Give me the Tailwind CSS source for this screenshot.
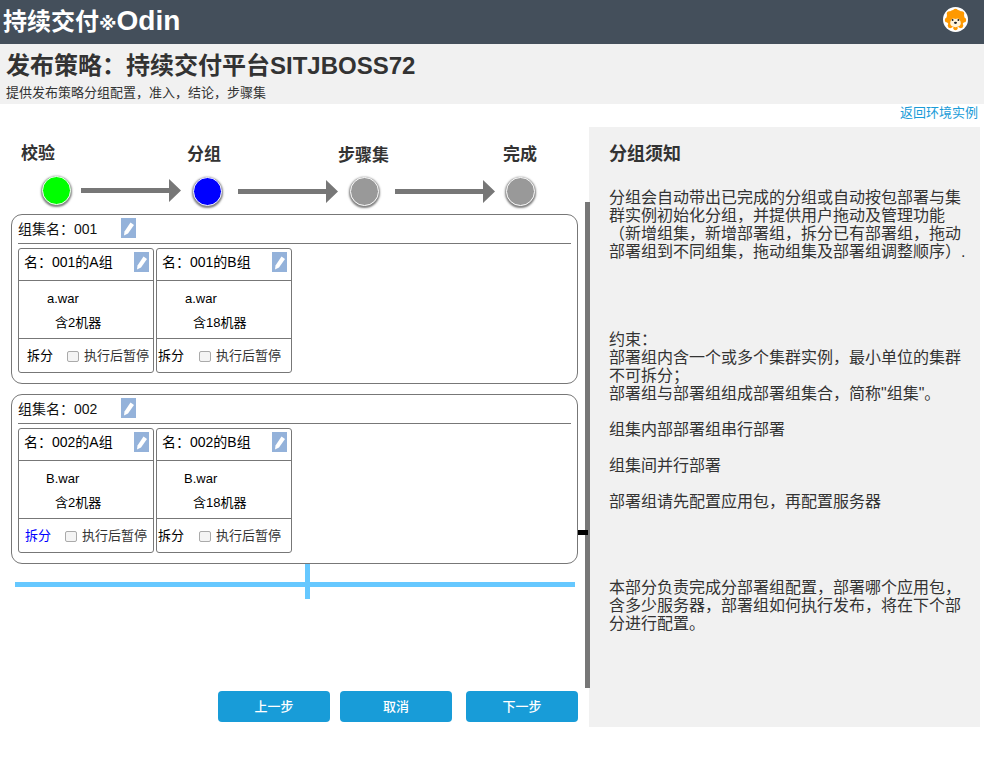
<!DOCTYPE html>
<html lang="zh">
<head>
<meta charset="utf-8">
<script src="https://cdn.jsdelivr.net/npm/@tailwindcss/browser@4"></script>
</head>
<body class="bg-white font-['Liberation_Sans','Noto_Sans_CJK_SC',sans-serif] text-[#333]">
<div class="w-[984px] h-[757px] relative overflow-hidden">
  <header class="h-[44px] bg-[#444f5b] flex items-center justify-between pl-[3px] pr-[16px]">
    <div class="text-white font-bold text-[24px] leading-[44px]">持续交付<span class="font-['DejaVu_Sans'] text-[18px]">※</span><span class="text-[28px]">Odin</span></div>
    <svg class="-mt-[5px]" width="25" height="25" viewBox="0 0 26 26">
      <circle cx="13" cy="13" r="13" fill="#fff"/>
      <circle cx="13" cy="12" r="9.5" fill="#f90"/>
      <circle cx="13" cy="4.5" r="2.6" fill="#f90"/><circle cx="6.5" cy="7" r="2.6" fill="#f90"/><circle cx="19.5" cy="7" r="2.6" fill="#f90"/><circle cx="4.5" cy="13.5" r="2.6" fill="#f90"/><circle cx="21.5" cy="13.5" r="2.6" fill="#f90"/><circle cx="7.5" cy="19.5" r="2.6" fill="#f90"/><circle cx="18.5" cy="19.5" r="2.6" fill="#f90"/><circle cx="13" cy="22" r="2.2" fill="#f90"/>
      <path d="M7.5 17c0-3.500 2-5 3.500-5 .8 0 1.200.5 2 .5s1.200-.5 2-.5c1.500 0 3.500 1.500 3.500 5 0 2.200-2.500 4-5.500 4s-5.500-1.800-5.500-4z" fill="#fff3d9"/>
      <circle cx="10" cy="13.500" r="1" fill="#222"/><circle cx="16" cy="13.500" r="1" fill="#222"/>
      <ellipse cx="13" cy="16.500" rx="1.600" ry="1.100" fill="#222"/>
    </svg>
  </header>
  <section class="h-[60px] bg-[#f1f1f1] pl-[6px]">
    <h1 class="font-bold text-[24px] leading-[28px] pt-[8px] box-content text-[#333]">发布策略：持续交付平台SITJBOSS72</h1>
    <p class="text-[13px] leading-[16px] mt-[5px] text-[#333]">提供发布策略分组配置，准入，结论，步骤集</p>
  </section>
  <div class="h-[23px] flex justify-end pr-[6px] text-[13px] leading-[17px] text-[#1a9cd8]"><a href="#">返回环境实例</a></div>

  <div class="flex items-start">
    <main class="w-[589px] h-[600px] relative pl-[11px]">
      <!-- step labels -->
      <div class="flex h-[47px] font-bold text-[17px] -ml-[11px]">
        <span class="ml-[21px] mt-[16px] h-[22px] leading-[22px]">校验</span>
        <span class="ml-[132px] mt-[17px] h-[22px] leading-[22px]">分组</span>
        <span class="ml-[117px] mt-[18px] h-[22px] leading-[22px]">步骤集</span>
        <span class="ml-[114px] mt-[17px] h-[22px] leading-[22px]">完成</span>
      </div>
      <!-- step track -->
      <div class="flex items-center h-[35px] mb-[5px] -ml-[11px] pl-[42px]">
        <span class="w-[29px] h-[29px] rounded-full border border-white bg-[#00ff00] shadow-[0_1px_2px_1px_rgba(0,0,0,0.5)] -mt-[3px]"></span>
        <svg class="ml-[10px] -mt-[2px]" width="100" height="23" viewBox="0 0 100 23"><path d="M0 9h88V0l12 11.500-12 11.500v-9H0z" fill="#777"/></svg>
        <span class="ml-[12px] w-[29px] h-[29px] rounded-full border border-white bg-[#0000ff] shadow-[0_1px_2px_1px_rgba(0,0,0,0.5)]"></span>
        <svg class="ml-[16px]" width="100" height="23" viewBox="0 0 100 23"><path d="M0 9h88V0l12 11.500-12 11.500v-9H0z" fill="#777"/></svg>
        <span class="ml-[12px] w-[29px] h-[29px] rounded-full border border-white bg-[#999] shadow-[0_1px_2px_1px_rgba(0,0,0,0.5)]"></span>
        <svg class="ml-[16px]" width="100" height="23" viewBox="0 0 100 23"><path d="M0 9h88V0l12 11.500-12 11.500v-9H0z" fill="#777"/></svg>
        <span class="ml-[11px] w-[29px] h-[29px] rounded-full border border-white bg-[#999] shadow-[0_1px_2px_1px_rgba(0,0,0,0.5)]"></span>
      </div>

      <!-- group 1 -->
      <section class="w-[567px] h-[170px] border border-[#777] rounded-[11px] px-[6px] text-[14px] text-black">
        <div class="h-[29px] border-b border-[#777] flex items-center">
          <span class="w-[103px] text-[#111] leading-[28px]">组集名：001</span>
          <svg class="-mt-[2px]" width="15" height="20" viewBox="0 0 15 20"><rect width="15" height="20" fill="#94b2da"/><path d="M3 17.500l.5-4L9.500 4.500 13 7 7 15.500z" fill="#fff"/></svg>
        </div>
        <div class="flex gap-[2px] mt-[4px]">
          <article class="w-[136px] h-[125px] border border-[#777] rounded-[3px] flex flex-col">
            <div class="h-[32px] border-b border-[#777] flex items-center justify-between pl-[5px] pr-[4px] pb-[5px]"><span>名：001的A组</span><svg width="15" height="20" viewBox="0 0 15 20"><rect width="15" height="20" fill="#94b2da"/><path d="M3 17.500l.5-4L9.500 4.500 13 7 7 15.500z" fill="#fff"/></svg></div>
            <div class="h-[58px] border-b border-[#777] text-[13px]"><div class="pl-[28px] pt-[9px] leading-[18px]">a.war</div><div class="pl-[36px] pt-[6px] leading-[18px]">含2机器</div></div>
            <div class="flex-1 flex items-center pl-[8px] pt-px text-[13px]"><span class="w-[40px]">拆分</span><input type="checkbox" class="w-[12px] h-[11px] appearance-none border border-[#aaa] rounded-[2px] bg-[#f4f4f4]"><span class="ml-[5px] text-[#333]">执行后暂停</span></div>
          </article>
          <article class="w-[136px] h-[125px] border border-[#777] rounded-[3px] flex flex-col">
            <div class="h-[32px] border-b border-[#777] flex items-center justify-between pl-[5px] pr-[4px] pb-[5px]"><span>名：001的B组</span><svg width="15" height="20" viewBox="0 0 15 20"><rect width="15" height="20" fill="#94b2da"/><path d="M3 17.500l.5-4L9.500 4.500 13 7 7 15.500z" fill="#fff"/></svg></div>
            <div class="h-[58px] border-b border-[#777] text-[13px]"><div class="pl-[28px] pt-[9px] leading-[18px]">a.war</div><div class="pl-[36px] pt-[6px] leading-[18px]">含18机器</div></div>
            <div class="flex-1 flex items-center pl-[1px] pt-px text-[13px]"><span class="w-[41px]">拆分</span><input type="checkbox" class="w-[12px] h-[11px] appearance-none border border-[#aaa] rounded-[2px] bg-[#f4f4f4]"><span class="ml-[5px] text-[#333]">执行后暂停</span></div>
          </article>
        </div>
      </section>

      <!-- group 2 -->
      <section class="w-[567px] h-[170px] mt-[10px] border border-[#777] rounded-[11px] px-[6px] text-[14px] text-black">
        <div class="h-[29px] border-b border-[#777] flex items-center">
          <span class="w-[103px] text-[#111] leading-[28px]">组集名：002</span>
          <svg class="-mt-[2px]" width="15" height="20" viewBox="0 0 15 20"><rect width="15" height="20" fill="#94b2da"/><path d="M3 17.500l.5-4L9.500 4.500 13 7 7 15.500z" fill="#fff"/></svg>
        </div>
        <div class="flex gap-[2px] mt-[4px]">
          <article class="w-[136px] h-[125px] border border-[#777] rounded-[3px] flex flex-col">
            <div class="h-[32px] border-b border-[#777] flex items-center justify-between pl-[5px] pr-[4px] pb-[5px]"><span>名：002的A组</span><svg width="15" height="20" viewBox="0 0 15 20"><rect width="15" height="20" fill="#94b2da"/><path d="M3 17.500l.5-4L9.500 4.500 13 7 7 15.500z" fill="#fff"/></svg></div>
            <div class="h-[58px] border-b border-[#777] text-[13px]"><div class="pl-[27px] pt-[9px] leading-[18px]">B.war</div><div class="pl-[36px] pt-[6px] leading-[18px]">含2机器</div></div>
            <div class="flex-1 flex items-center pl-[6px] pt-px text-[13px]"><span class="w-[40px] text-[#0000ff]">拆分</span><input type="checkbox" class="w-[12px] h-[11px] appearance-none border border-[#aaa] rounded-[2px] bg-[#f4f4f4]"><span class="ml-[5px] text-[#333]">执行后暂停</span></div>
          </article>
          <article class="w-[136px] h-[125px] border border-[#777] rounded-[3px] flex flex-col">
            <div class="h-[32px] border-b border-[#777] flex items-center justify-between pl-[5px] pr-[4px] pb-[5px]"><span>名：002的B组</span><svg width="15" height="20" viewBox="0 0 15 20"><rect width="15" height="20" fill="#94b2da"/><path d="M3 17.500l.5-4L9.500 4.500 13 7 7 15.500z" fill="#fff"/></svg></div>
            <div class="h-[58px] border-b border-[#777] text-[13px]"><div class="pl-[27px] pt-[9px] leading-[18px]">B.war</div><div class="pl-[36px] pt-[6px] leading-[18px]">含18机器</div></div>
            <div class="flex-1 flex items-center pl-[1px] pt-px text-[13px]"><span class="w-[41px]">拆分</span><input type="checkbox" class="w-[12px] h-[11px] appearance-none border border-[#aaa] rounded-[2px] bg-[#f4f4f4]"><span class="ml-[5px] text-[#333]">执行后暂停</span></div>
          </article>
        </div>
      </section>

      <!-- drop target -->
      <div class="relative w-[560px] h-[5px] mt-[18px] ml-[4px] bg-[#66c8ff]">
        <span class="absolute left-[290px] -top-[18px] w-[5px] h-[35px] bg-[#66c8ff]"></span>
      </div>

      <!-- buttons -->
      <div class="flex mt-[104px] ml-[207px] text-white text-[13px] font-medium">
        <button class="w-[112px] h-[31px] rounded-[4px] bg-[#189cd8]">上一步</button>
        <button class="w-[112px] h-[31px] rounded-[4px] bg-[#189cd8] ml-[10px]">取消</button>
        <button class="w-[112px] h-[31px] rounded-[4px] bg-[#189cd8] ml-[14px]">下一步</button>
      </div>

      <!-- splitter -->
      <span class="absolute left-[585px] top-[75px] w-[5px] h-[486px] bg-[#777]"></span>
      <span class="absolute left-[578px] top-[403px] w-[10px] h-[5px] bg-black"></span>
    </main>

    <aside class="w-[391px] h-[600px] bg-[#f1f1f1] pl-[20px] pr-[14px] text-[16px] leading-[18px] text-[#333]">
      <h2 class="font-bold text-[18px] leading-[22px] pt-[16px] box-content">分组须知</h2>
      <p class="mt-[24px]">分组会自动带出已完成的分组或自动按包部署与集群实例初始化分组，并提供用户拖动及管理功能（新增组集，新增部署组，拆分已有部署组，拖动部署组到不同组集，拖动组集及部署组调整顺序）.</p>
      <p class="mt-[70px]">约束：<br>部署组内含一个或多个集群实例，最小单位的集群不可拆分；<br>部署组与部署组组成部署组集合，简称"组集"。</p>
      <p class="mt-[18px]">组集内部部署组串行部署</p>
      <p class="mt-[18px]">组集间并行部署</p>
      <p class="mt-[18px]">部署组请先配置应用包，再配置服务器</p>
      <p class="mt-[68px]">本部分负责完成分部署组配置，部署哪个应用包，含多少服务器，部署组如何执行发布，将在下个部分进行配置。</p>
    </aside>
  </div>
</div>
</body>
</html>
